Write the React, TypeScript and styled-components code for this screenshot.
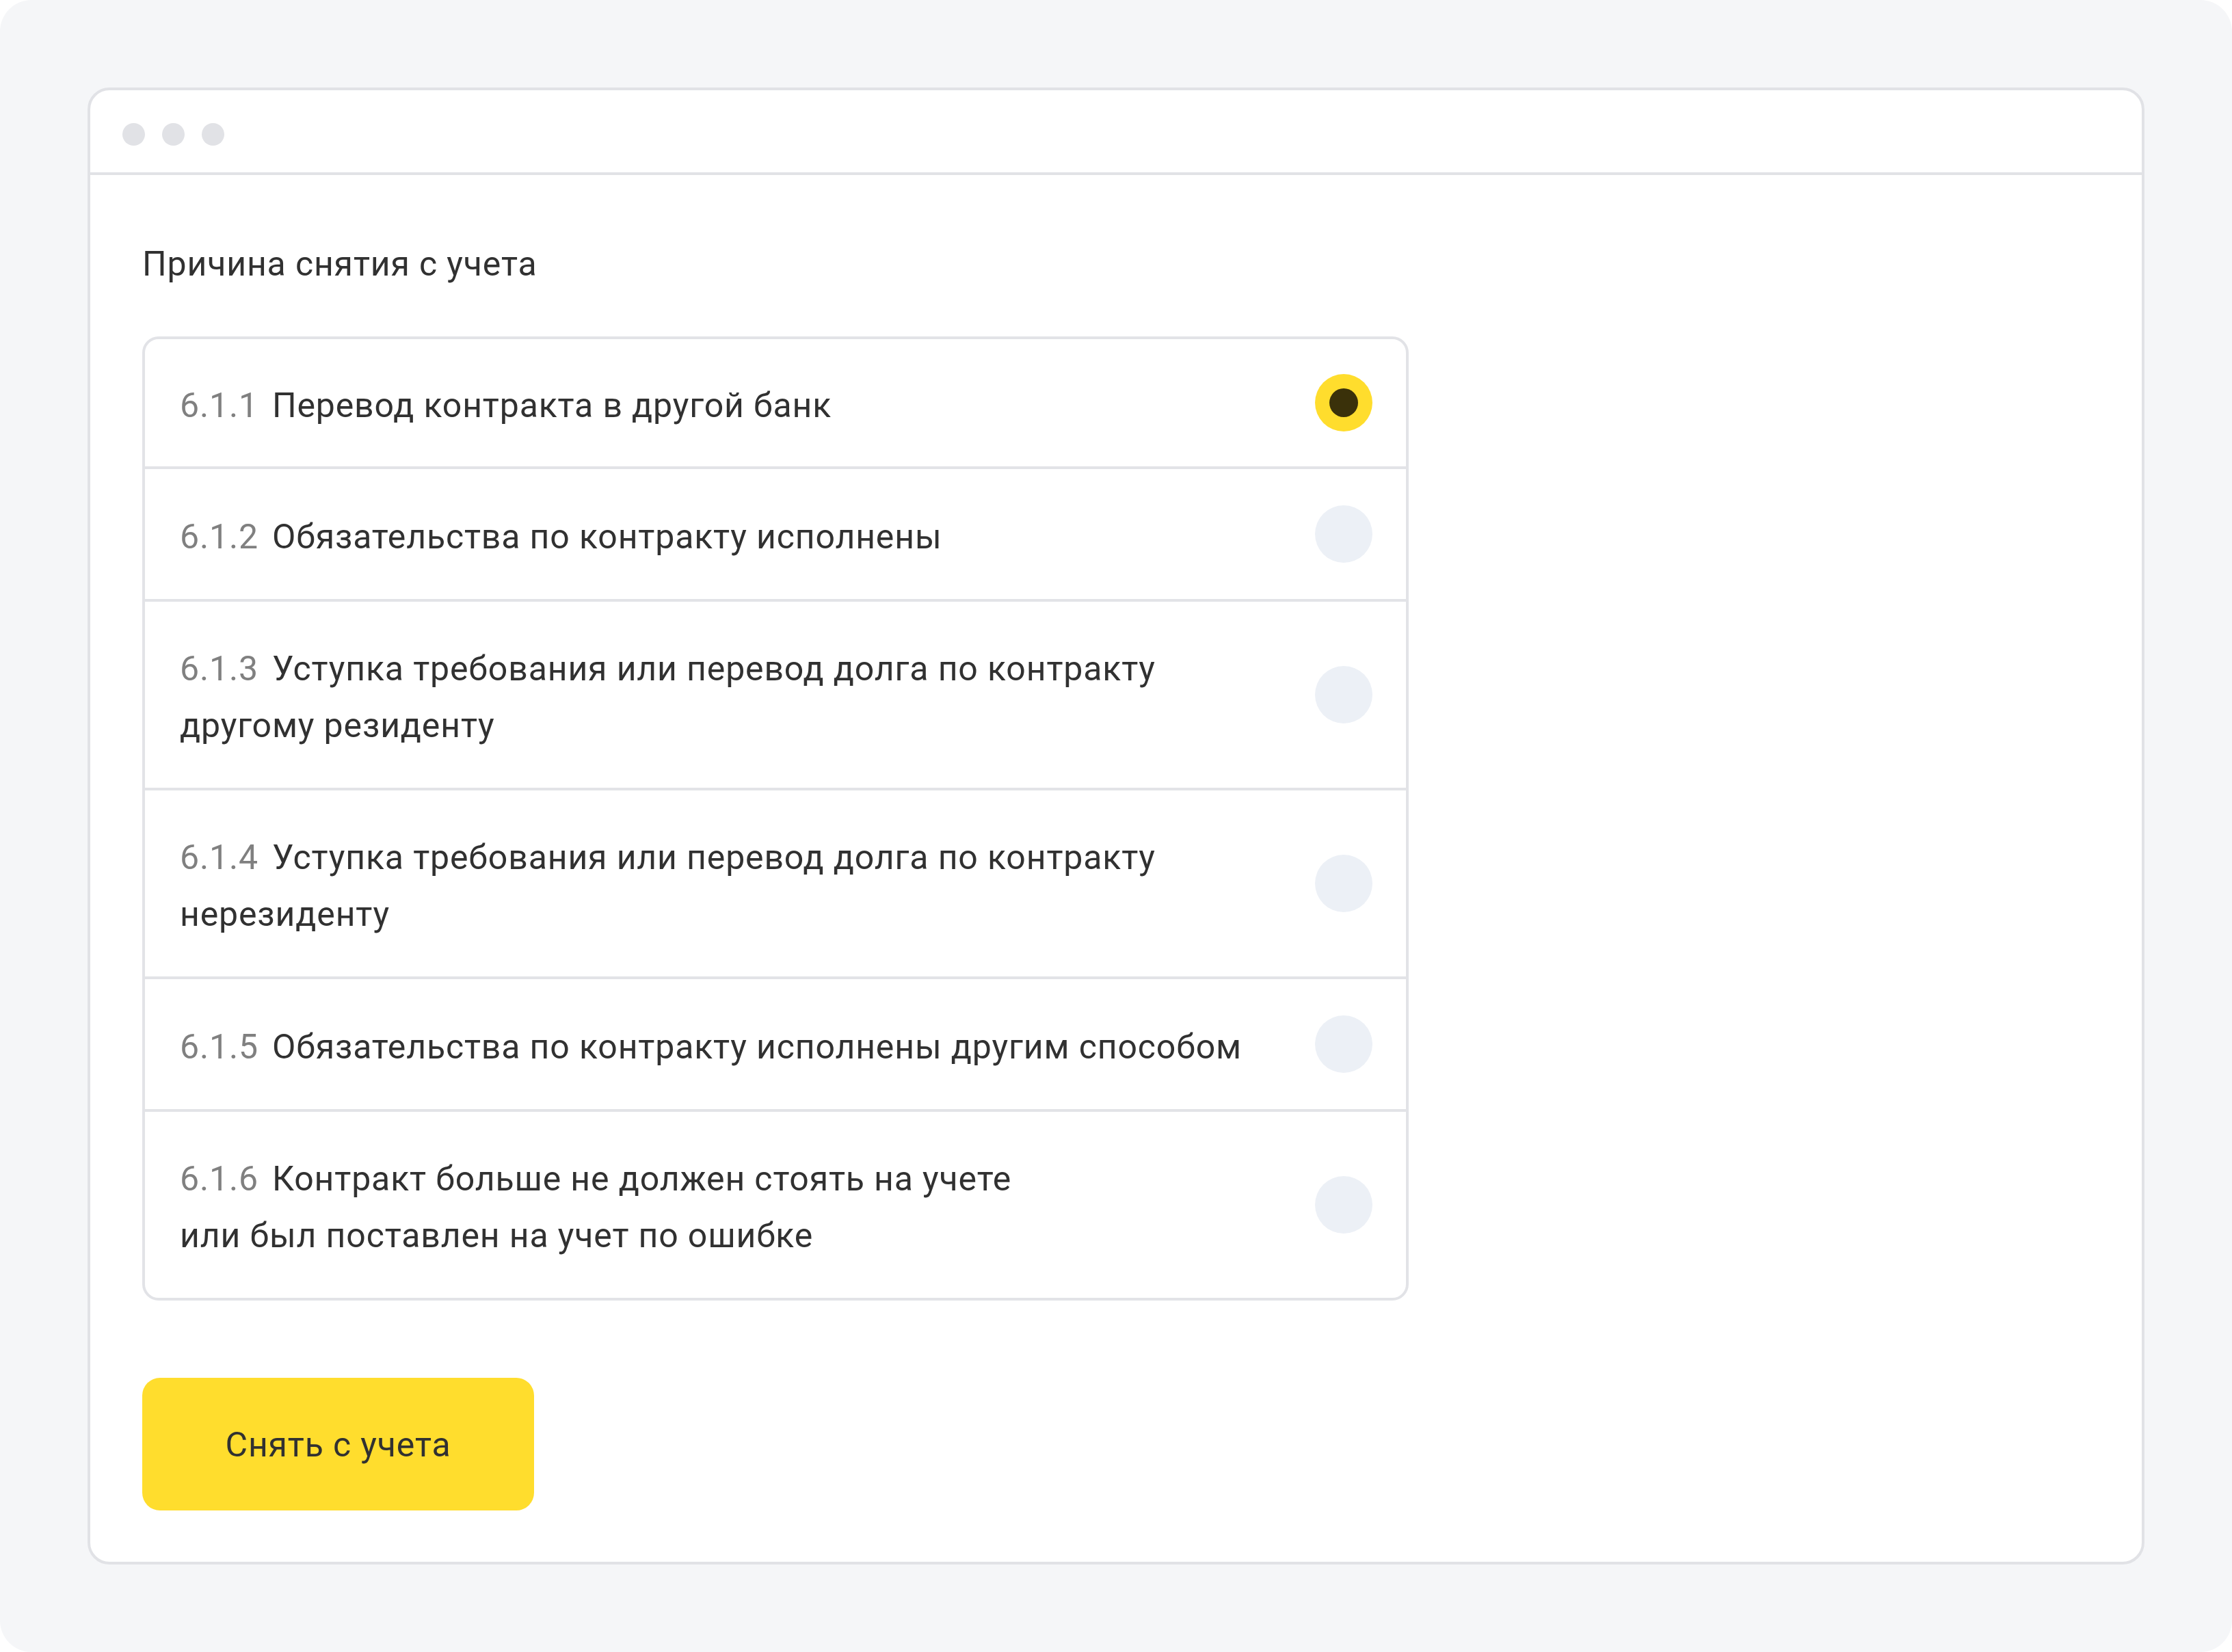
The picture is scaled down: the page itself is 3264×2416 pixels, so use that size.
import React from "react";
import styled, { createGlobalStyle } from "styled-components";

const GlobalStyle = createGlobalStyle`
  html, body {
    margin: 0;
    padding: 0;
    background: #ffffff;
  }
  * { box-sizing: border-box; }
`;

const Page = styled.div`
  width: 3264px;
  height: 2416px;
  background: #f5f6f8;
  border-radius: 46px;
  padding: 128px;
  font-family: Roboto, "Liberation Sans", sans-serif;
`;

const Window = styled.div`
  height: 100%;
  background: #ffffff;
  border: 4px solid #e1e2e6;
  border-radius: 32px;
  display: flex;
  flex-direction: column;
  overflow: hidden;
`;

const TitleBar = styled.div`
  height: 124px;
  flex: none;
  border-bottom: 4px solid #e1e2e6;
  display: flex;
  align-items: center;
  gap: 25px;
  padding: 8px 0 0 47px;
`;

const Dot = styled.span`
  width: 33px;
  height: 33px;
  border-radius: 50%;
  background: #e1e2e6;
`;

const Content = styled.div`
  padding: 89px 76px 77px 76px;
  display: flex;
  flex-direction: column;
  align-items: flex-start;
`;

const Title = styled.div`
  font-size: 50px;
  line-height: 83px;
  letter-spacing: 0.85px;
  color: #313131;
`;

const List = styled.div`
  margin-top: 64px;
  width: 1852px;
  border: 4px solid #e2e3e7;
  border-radius: 24px;
  display: flex;
  flex-direction: column;
`;

const Row = styled.div<{ $first?: boolean }>`
  display: flex;
  align-items: center;
  padding: ${(p) => (p.$first ? "51px 49px 51px 51px" : "53px 49px 53px 51px")};
  border-top: ${(p) => (p.$first ? "none" : "4px solid #e2e3e7")};
`;

const Label = styled.div`
  flex: 1;
  padding: 4px 0 0;
  margin-bottom: -4px;
  font-size: 50px;
  line-height: 83px;
  letter-spacing: 0.85px;
  color: #313131;
`;

const Num = styled.span`
  color: #808080;
  margin-right: 20px;
`;

const Radio = styled.span<{ $checked?: boolean }>`
  flex: none;
  width: 84px;
  height: 84px;
  border-radius: 50%;
  background: ${(p) => (p.$checked ? "#ffdd2d" : "#ecf0f6")};
  display: flex;
  align-items: center;
  justify-content: center;
  &::after {
    content: "";
    display: ${(p) => (p.$checked ? "block" : "none")};
    width: 42px;
    height: 42px;
    border-radius: 50%;
    background: #3a310a;
  }
`;

const Button = styled.button`
  margin-top: 113px;
  width: 573px;
  height: 194px;
  border: none;
  border-radius: 26px;
  background: #ffdd2d;
  color: #313131;
  font-family: Roboto, "Liberation Sans", sans-serif;
  font-size: 50px;
  line-height: 83px;
  letter-spacing: 0.85px;
  padding: 2px 0 0;
`;

const items: { num: string; lines: string[] }[] = [
  { num: "6.1.1", lines: ["Перевод контракта в другой банк"] },
  { num: "6.1.2", lines: ["Обязательства по контракту исполнены"] },
  {
    num: "6.1.3",
    lines: ["Уступка требования или перевод долга по контракту", "другому резиденту"],
  },
  {
    num: "6.1.4",
    lines: ["Уступка требования или перевод долга по контракту", "нерезиденту"],
  },
  { num: "6.1.5", lines: ["Обязательства по контракту исполнены другим способом"] },
  {
    num: "6.1.6",
    lines: ["Контракт больше не должен стоять на учете", "или был поставлен на учет по ошибке"],
  },
];

export default function App() {
  return (
    <>
      <GlobalStyle />
      <Page>
        <Window>
          <TitleBar>
            <Dot />
            <Dot />
            <Dot />
          </TitleBar>
          <Content>
            <Title>Причина снятия с учета</Title>
            <List>
              {items.map((it, i) => (
                <Row key={it.num} $first={i === 0}>
                  <Label>
                    <Num>{it.num}</Num>
                    {it.lines.map((l, j) => (
                      <React.Fragment key={j}>
                        {j > 0 && <br />}
                        {l}
                      </React.Fragment>
                    ))}
                  </Label>
                  <Radio $checked={i === 0} />
                </Row>
              ))}
            </List>
            <Button>Снять с учета</Button>
          </Content>
        </Window>
      </Page>
    </>
  );
}
